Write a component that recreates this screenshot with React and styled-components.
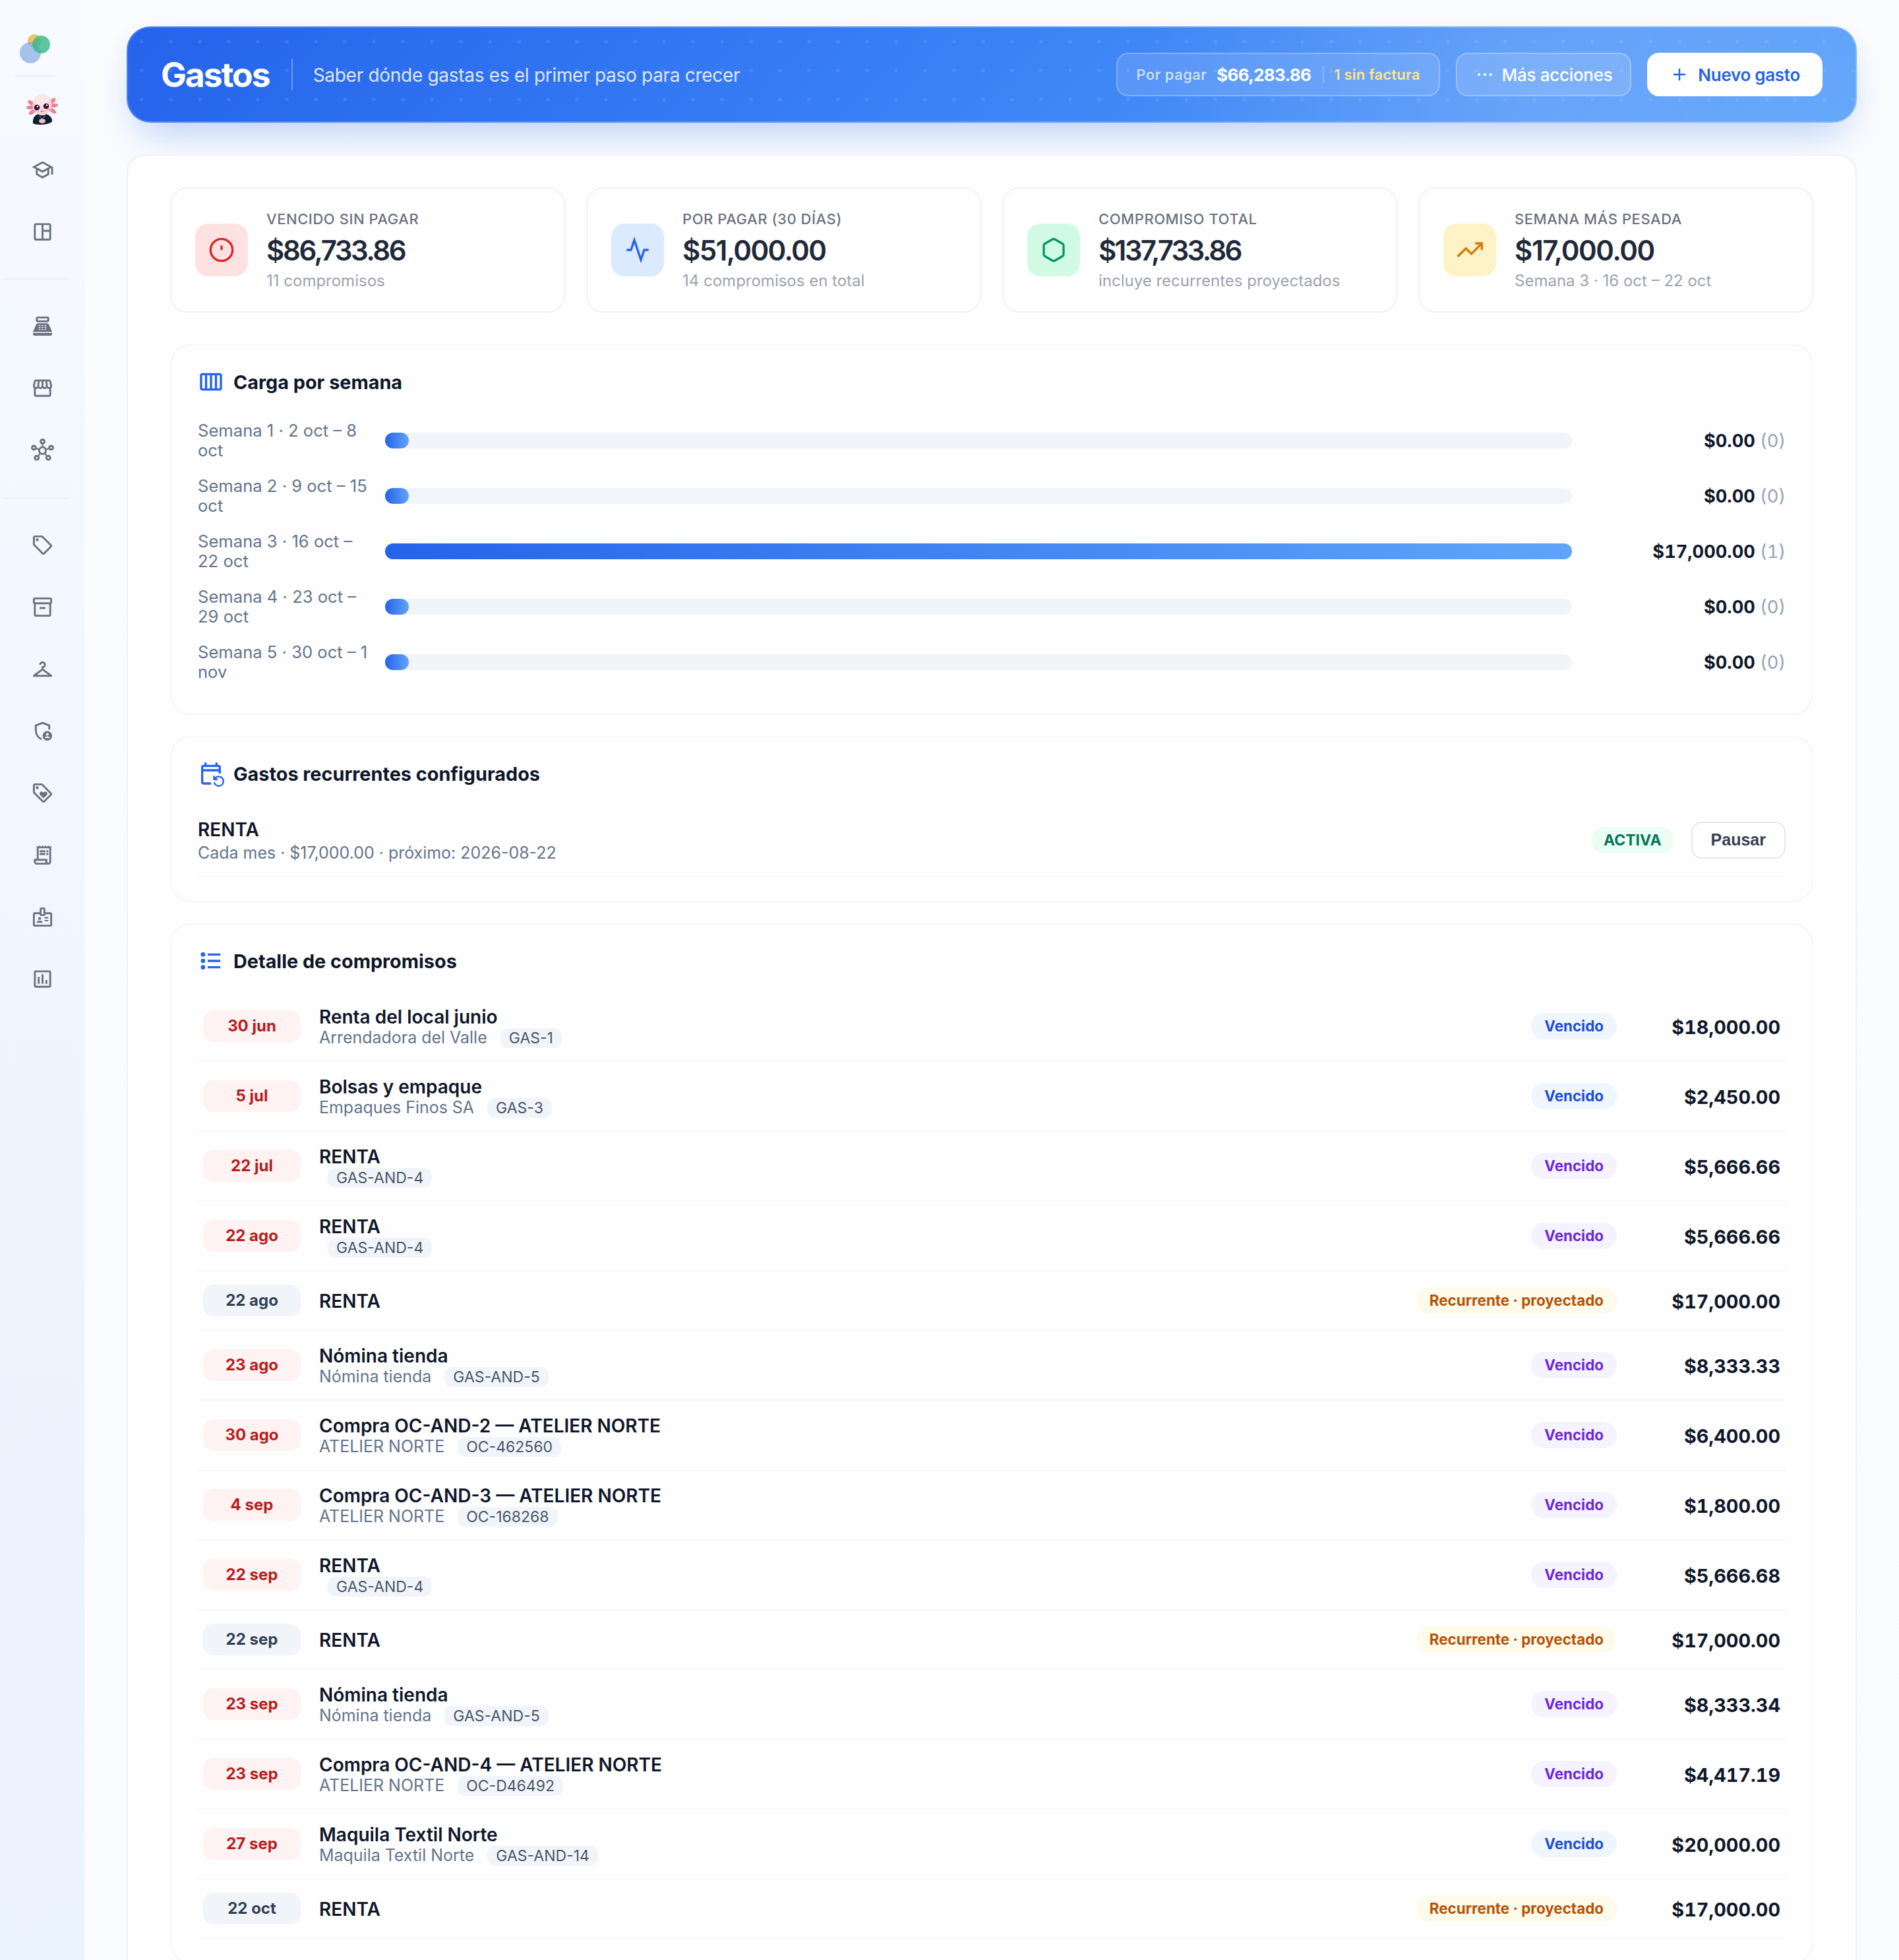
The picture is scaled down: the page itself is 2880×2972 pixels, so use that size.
import React from 'react'
import styled, { createGlobalStyle } from 'styled-components'
import {
  MdOutlineSchool,
  MdOutlineSpaceDashboard,
  MdPointOfSale,
  MdOutlineStorefront,
  MdOutlineHub,
  MdOutlineSell,
  MdOutlineInventory2,
  MdOutlineCheckroom,
  MdOutlineLoyalty,
  MdOutlineReceiptLong,
  MdOutlineBadge,
  MdOutlineInsertChart,
  MdOutlineCalendarViewWeek,
  MdOutlineEventRepeat
} from 'react-icons/md'

const ShieldPerson = () => (
  <svg viewBox="0 0 24 24" fill="none">
    <path d="M19 10.500V6.200L12 3.500 5 6.200v4.900c0 4.400 2.600 7.900 6 9.400" stroke="currentColor" strokeWidth="2" />
    <circle cx="17" cy="17" r="5" fill="currentColor" />
    <circle cx="17" cy="15.400" r="1.400" fill="#f2f6ff" />
    <path d="M14.300 19.200c.4-1.200 1.500-1.700 2.700-1.700s2.300.5 2.700 1.700z" fill="#f2f6ff" />
  </svg>
)

const BulletList = () => (
  <svg viewBox="0 0 24 24" fill="currentColor">
    <circle cx="4.700" cy="6.200" r="2" />
    <circle cx="4.700" cy="12" r="2" />
    <circle cx="4.700" cy="17.800" r="2" />
    <path d="M9 5.200h11.500v2H9zM9 11h11.500v2H9zM9 16.800h11.500v2H9z" />
  </svg>
)

const navGroups = [
  [MdOutlineSchool, MdOutlineSpaceDashboard],
  [MdPointOfSale, MdOutlineStorefront, MdOutlineHub],
  [
    MdOutlineSell,
    MdOutlineInventory2,
    MdOutlineCheckroom,
    ShieldPerson,
    MdOutlineLoyalty,
    MdOutlineReceiptLong,
    MdOutlineBadge,
    MdOutlineInsertChart
  ]
]

const stats = [
  {
    label: 'VENCIDO SIN PAGAR',
    value: '$86,733.86',
    spacing: '-2.400px',
    note: '11 compromisos',
    color: '#dc2626',
    bg: '#fee2e2',
    icon: <><circle cx="12" cy="12" r="10" /><path d="M12 8v4" strokeLinecap="butt" /></>
  },
  {
    label: 'POR PAGAR (30 DÍAS)',
    value: '$51,000.00',
    spacing: '-1.600px',
    note: '14 compromisos en total',
    color: '#2563eb',
    bg: '#dbeafe',
    icon: <path d="M22 12h-4l-3 9L9 3l-3 9H2" />
  },
  {
    label: 'COMPROMISO TOTAL',
    value: '$137,733.86',
    spacing: '-2.700px',
    note: 'incluye recurrentes proyectados',
    color: '#059669',
    bg: '#d1fae5',
    icon: <path d="M21 16V8a2 2 0 0 0-1-1.73l-7-4a2 2 0 0 0-2 0l-7 4A2 2 0 0 0 3 8v8a2 2 0 0 0 1 1.73l7 4a2 2 0 0 0 2 0l7-4A2 2 0 0 0 21 16z" />
  },
  {
    label: 'SEMANA MÁS PESADA',
    value: '$17,000.00',
    spacing: '-1.400px',
    note: 'Semana 3 · 16 oct – 22 oct',
    color: '#d97706',
    bg: '#fef3c7',
    icon: <><path d="M23 6l-9.500 9.500-5-5L1 18" /><path d="M17 6h6v6" /></>
  }
]

const weeks = [
  { label: 'Semana 1 · 2 oct – 8 oct', pct: 2, total: '$0.00', count: 0 },
  { label: 'Semana 2 · 9 oct – 15 oct', pct: 2, total: '$0.00', count: 0 },
  { label: 'Semana 3 · 16 oct – 22 oct', pct: 100, total: '$17,000.00', count: 1 },
  { label: 'Semana 4 · 23 oct – 29 oct', pct: 2, total: '$0.00', count: 0 },
  { label: 'Semana 5 · 30 oct – 1 nov', pct: 2, total: '$0.00', count: 0 }
]

const items = [
  { date: '30 jun', title: 'Renta del local junio', who: 'Arrendadora del Valle', ref: 'GAS-1', kind: 'blue', amount: '$18,000.00' },
  { date: '5 jul', title: 'Bolsas y empaque', who: 'Empaques Finos SA', ref: 'GAS-3', kind: 'blue', amount: '$2,450.00' },
  { date: '22 jul', title: 'RENTA', who: '', ref: 'GAS-AND-4', kind: 'purple', amount: '$5,666.66' },
  { date: '22 ago', title: 'RENTA', who: '', ref: 'GAS-AND-4', kind: 'purple', amount: '$5,666.66' },
  { date: '22 ago', title: 'RENTA', kind: 'amber', amount: '$17,000.00' },
  { date: '23 ago', title: 'Nómina tienda', who: 'Nómina tienda', ref: 'GAS-AND-5', kind: 'purple', amount: '$8,333.33' },
  { date: '30 ago', title: 'Compra OC-AND-2 — ATELIER NORTE', who: 'ATELIER NORTE', ref: 'OC-462560', kind: 'purple', amount: '$6,400.00' },
  { date: '4 sep', title: 'Compra OC-AND-3 — ATELIER NORTE', who: 'ATELIER NORTE', ref: 'OC-168268', kind: 'purple', amount: '$1,800.00' },
  { date: '22 sep', title: 'RENTA', who: '', ref: 'GAS-AND-4', kind: 'purple', amount: '$5,666.68' },
  { date: '22 sep', title: 'RENTA', kind: 'amber', amount: '$17,000.00' },
  { date: '23 sep', title: 'Nómina tienda', who: 'Nómina tienda', ref: 'GAS-AND-5', kind: 'purple', amount: '$8,333.34' },
  { date: '23 sep', title: 'Compra OC-AND-4 — ATELIER NORTE', who: 'ATELIER NORTE', ref: 'OC-D46492', kind: 'purple', amount: '$4,417.19' },
  { date: '27 sep', title: 'Maquila Textil Norte', who: 'Maquila Textil Norte', ref: 'GAS-AND-14', kind: 'blue', amount: '$20,000.00' },
  { date: '22 oct', title: 'RENTA', kind: 'amber', amount: '$17,000.00' }
]

const kinds = {
  blue: { color: '#1d4ed8', bg: '#eff6ff' },
  purple: { color: '#6d28d9', bg: '#f5f3ff' },
  amber: { color: '#b45309', bg: '#fffbeb' }
}

const Logo = () => (
  <svg width="48" height="46" viewBox="0 0 48 46">
    <circle cx="22" cy="10" r="10" fill="#e9b44c" opacity="0.8" />
    <circle cx="16" cy="28" r="16" fill="#7ba4e0" opacity="0.65" />
    <circle cx="32.500" cy="15.500" r="13.500" fill="#34b98a" opacity="0.8" />
  </svg>
)

const Axolotl = () => (
  <svg width="48" height="48" viewBox="0 0 48 48">
    <g fill="#e8838f">
      <ellipse cx="7" cy="15" rx="5.500" ry="3" transform="rotate(35 7 15)" />
      <ellipse cx="6" cy="22" rx="6" ry="3" />
      <ellipse cx="8.500" cy="29" rx="5.500" ry="3" transform="rotate(-40 8.500 29)" />
      <ellipse cx="40" cy="12" rx="5.500" ry="3" transform="rotate(-50 40 12)" />
      <ellipse cx="42" cy="19" rx="6" ry="3" transform="rotate(-8 42 19)" />
      <ellipse cx="40" cy="27" rx="6" ry="3" transform="rotate(35 40 27)" />
    </g>
    <path d="M10 46c-1-8 3-15 14-15s16 8 15 12c-4 6-25 6-29 3z" fill="#131c2e" />
    <ellipse cx="24" cy="18" rx="14.500" ry="16" fill="#f7d0d4" />
    <ellipse cx="23.500" cy="11" rx="11" ry="8.500" fill="#fbe6e6" />
    <ellipse cx="13" cy="27" rx="2.500" ry="1.800" fill="#f2a0b4" />
    <ellipse cx="34" cy="25" rx="2.500" ry="1.800" fill="#f2a0b4" />
    <circle cx="16" cy="22" r="4.200" fill="#2a1838" />
    <circle cx="30" cy="20" r="4.200" fill="#2a1838" />
    <circle cx="17" cy="20.500" r="1.200" fill="#fff" />
    <circle cx="31" cy="18.500" r="1.200" fill="#fff" />
    <path d="M21.500 27.500q2.500 2 5 0" stroke="#b4505f" strokeWidth="1" fill="none" />
    <path d="M19 35l5 4 5-4" stroke="#28528c" strokeWidth="2" fill="none" />
    <ellipse cx="24" cy="42.500" rx="5" ry="3.500" fill="#f3bfc0" />
  </svg>
)

const App = () => {
  return (
    <>
      <GlobalStyle />
      <Page>
        <Sidebar>
          <Brand><Logo /></Brand>
          <BrandLine />
          <Avatar><Axolotl /></Avatar>
          {navGroups.map((group, i) => (
            <NavGroup key={i}>
              {group.map((Icon, j) => (
                <NavItem key={j}><Icon /></NavItem>
              ))}
            </NavGroup>
          ))}
        </Sidebar>
        <Main>
          <Hero>
            <HeroTitle>Gastos</HeroTitle>
            <HeroText>Saber dónde gastas es el primer paso para crecer</HeroText>
            <HeroActions>
              <DuePill>
                <span className="label">Por pagar</span>
                <span className="total">$66,283.86</span>
                <span className="warn">1 sin factura</span>
              </DuePill>
              <GhostButton>
                <svg width="28" height="28" viewBox="0 0 24 24" fill="currentColor">
                  <circle cx="4.500" cy="12" r="1.700" />
                  <circle cx="12" cy="12" r="1.700" />
                  <circle cx="19.500" cy="12" r="1.700" />
                </svg>
                <span>Más acciones</span>
              </GhostButton>
              <PrimaryButton>
                <svg width="24" height="24" viewBox="0 0 24 24" fill="none" stroke="currentColor" strokeWidth="2.400">
                  <path d="M12 3v18M3 12h18" />
                </svg>
                <span>Nuevo gasto</span>
              </PrimaryButton>
            </HeroActions>
          </Hero>

          <Panel>
            <Stats>
              {stats.map((s) => (
                <StatCard key={s.label}>
                  <StatIcon $color={s.color} $bg={s.bg}>
                    <svg viewBox="0 0 24 24" fill="none" stroke="currentColor" strokeWidth="2">{s.icon}</svg>
                  </StatIcon>
                  <StatBody $spacing={s.spacing}>
                    <div className="label">{s.label}</div>
                    <div className="value">{s.value}</div>
                    <div className="note">{s.note}</div>
                  </StatBody>
                </StatCard>
              ))}
            </Stats>

            <Section $bottom="48px">
              <SectionTitle $gap="39px"><MdOutlineCalendarViewWeek /><h2>Carga por semana</h2></SectionTitle>
              <Weeks>
                {weeks.map((w) => (
                  <WeekRow key={w.label}>
                    <WeekLabel>{w.label}</WeekLabel>
                    <Track><Fill style={{ width: `${w.pct}%` }} /></Track>
                    <WeekTotal>{w.total} <span>({w.count})</span></WeekTotal>
                  </WeekRow>
                ))}
              </Weeks>
            </Section>

            <Section $bottom="36px">
              <SectionTitle $gap="26px"><MdOutlineEventRepeat /><h2>Gastos recurrentes configurados</h2></SectionTitle>
              <RecurringRow>
                <div>
                  <RowTitle>RENTA</RowTitle>
                  <RecurringMeta>Cada mes · $17,000.00 · próximo: 2026-08-22</RecurringMeta>
                </div>
                <RecurringActions>
                  <StatusBadge>ACTIVA</StatusBadge>
                  <PauseButton>Pausar</PauseButton>
                </RecurringActions>
              </RecurringRow>
            </Section>

            <Section $bottom="36px">
              <SectionTitle $gap="27px"><BulletList /><h2>Detalle de compromisos</h2></SectionTitle>
              {items.map((it, i) => (
                <ItemRow key={i} $short={!it.ref}>
                  <DatePill $projected={it.kind === 'amber'}>{it.date}</DatePill>
                  <ItemBody>
                    <RowTitle>{it.title}</RowTitle>
                    {it.ref && <ItemMeta>{it.who} <RefTag>{it.ref}</RefTag></ItemMeta>}
                  </ItemBody>
                  <KindBadge $kind={kinds[it.kind]}>
                    {it.kind === 'amber' ? 'Recurrente · proyectado' : 'Vencido'}
                  </KindBadge>
                  <Amount>{it.amount}</Amount>
                </ItemRow>
              ))}
            </Section>
          </Panel>
        </Main>
      </Page>
    </>
  )
}

const GlobalStyle = createGlobalStyle`
    * {
        box-sizing: border-box;
    }
    body {
        margin: 0;
        background: #fbfcfe;
        font-family: Inter, "Liberation Sans", sans-serif;
        color: #0f172a;
    }
`

const Page = styled.div`
    display: flex;
    height: 2972px;
    overflow: hidden;
    background: linear-gradient(180deg, #fafcfd 0%, #fbfcff 30%, #fafbfd 100%);
`

const Sidebar = styled.aside`
    width: 128px;
    flex-shrink: 0;
    padding-top: 50px;
    background: linear-gradient(180deg, #f7faff 0%, #f3f7ff 30%, #f0f5ff 50%, #ecf2fd 80%, #ebf3fe 100%);
`

const Brand = styled.div`
    height: 64px;
    padding-left: 30px;
    padding-top: 2px;
`

const BrandLine = styled.div`
    width: 62px;
    height: 2px;
    margin-left: 22px;
    background: #eaeef4;
`

const Avatar = styled.div`
    height: 94px;
    display: flex;
    align-items: center;
    justify-content: center;
    padding-top: 4px;
`

const NavGroup = styled.nav`
    & + & {
        margin-top: 24px;
        padding-top: 25.500px;
        background: linear-gradient(#eaeef4, #eaeef4) 6px 0 / 96px 2px no-repeat;
    }
`

const NavItem = styled.div`
    height: 94px;
    display: flex;
    align-items: center;
    justify-content: center;
    color: #6b7280;
    svg {
        width: 35px;
        height: 35px;
    }
`

const Main = styled.main`
    flex: 1;
    padding: 40px 64px 0;
`

const Hero = styled.header`
    display: flex;
    align-items: center;
    height: 146px;
    padding: 0 50px;
    border: 2px solid rgba(255, 255, 255, 0.2);
    border-radius: 36px;
    background:
        radial-gradient(circle, rgba(255, 255, 255, 0.1) 2px, transparent 3.500px) -1px -1px / 44px 44px,
        radial-gradient(circle at 82% 60%, rgba(255, 255, 255, 0.13), transparent 620px),
        linear-gradient(135deg, #2563eb 0%, #3b82f6 50%, #60a5fa 100%) border-box;
    box-shadow: 0 32px 64px -20px rgba(37, 99, 235, 0.3), 0 8px 40px rgba(37, 99, 235, 0.03);
    color: #fff;
`

const HeroTitle = styled.h1`
    margin: 0;
    font-size: 52px;
    font-weight: 700;
    letter-spacing: -2.200px;
`

const HeroText = styled.p`
    margin: 0 0 0 33px;
    padding-left: 31px;
    height: 48px;
    line-height: 50px;
    border-left: 2px solid rgba(255, 255, 255, 0.3);
    font-size: 28px;
    letter-spacing: -0.300px;
    color: rgba(255, 255, 255, 0.85);
`

const HeroActions = styled.div`
    display: flex;
    gap: 24px;
    margin-left: auto;
`

const DuePill = styled.div`
    display: flex;
    align-items: center;
    height: 66px;
    padding: 0 28px;
    border: 2px solid rgba(255, 255, 255, 0.25);
    border-radius: 18px;
    background: rgba(255, 255, 255, 0.12);
    .label {
        font-size: 22px;
        font-weight: 500;
        letter-spacing: 0.500px;
        color: rgba(255, 255, 255, 0.75);
    }
    .total {
        margin-left: 15px;
        font-size: 26px;
        font-weight: 700;
        letter-spacing: -0.700px;
    }
    .warn {
        margin-left: 18px;
        padding-left: 15px;
        border-left: 2px solid rgba(255, 255, 255, 0.25);
        font-size: 22px;
        font-weight: 600;
        letter-spacing: 0.200px;
        color: #fde68a;
    }
`

const GhostButton = styled.button`
    display: flex;
    align-items: center;
    gap: 12px;
    height: 66px;
    padding: 0 27px 0 28px;
    border: 2px solid rgba(255, 255, 255, 0.25);
    border-radius: 18px;
    background: rgba(255, 255, 255, 0.14);
    color: #fff;
    font-family: inherit;
    font-size: 26px;
    font-weight: 500;
    letter-spacing: -0.300px;
`

const PrimaryButton = styled(GhostButton)`
    gap: 16px;
    padding: 0 32px 0 35px;
    border-color: #fff;
    background: #fff;
    color: #2563eb;
    font-weight: 600;
`

const Panel = styled.div`
    margin-top: 48px;
    height: 2900px;
    padding: 48px 64px;
    border: 2px solid #eef1f4;
    border-radius: 28px;
    background: #fefefe;
`

const Stats = styled.div`
    display: grid;
    grid-template-columns: repeat(4, 1fr);
    gap: 32px;
    margin-bottom: 48px;
`

const StatCard = styled.div`
    display: flex;
    align-items: center;
    gap: 28px;
    height: 190px;
    padding: 0 36px;
    border: 2px solid #f0f1f3;
    border-radius: 26px;
    background: #fff;
`

const StatIcon = styled.div`
    display: flex;
    align-items: center;
    justify-content: center;
    width: 80px;
    height: 80px;
    border-radius: 20px;
    background: ${p => p.$bg};
    color: ${p => p.$color};
    svg {
        width: 40px;
        height: 40px;
    }
`

const StatBody = styled.div`
    .label {
        font-size: 22px;
        font-weight: 500;
        line-height: 32px;
        letter-spacing: 0.550px;
        color: #6b7280;
    }
    .value {
        padding-top: 2px;
        font-size: 42px;
        font-weight: 600;
        line-height: 60px;
        letter-spacing: ${p => p.$spacing};
        color: #1f2937;
    }
    .note {
        font-size: 24px;
        line-height: 32px;
        color: #9ca3af;
    }
`

const Section = styled.section`
    margin-bottom: 32px;
    padding: 35px 40px ${p => p.$bottom};
    border: 2px solid #f5f7f9;
    border-radius: 32px;
    background: #fefefe;
`

const SectionTitle = styled.div`
    display: flex;
    align-items: center;
    gap: 14px;
    height: 40px;
    margin-bottom: ${p => p.$gap};
    svg {
        width: 40px;
        height: 40px;
        color: #2563eb;
    }
    h2 {
        margin: 0;
        font-size: 28.800px;
        font-weight: 700;
    }
`

const Weeks = styled.div`
    display: grid;
    gap: 24px;
`

const WeekRow = styled.div`
    display: grid;
    grid-template-columns: 260px 1fr 300px;
    gap: 24px;
    align-items: center;
`

const WeekLabel = styled.div`
    font-size: 25.600px;
    line-height: 30px;
    color: #64748b;
`

const Track = styled.div`
    height: 24px;
    border-radius: 12px;
    background: #f1f5f9;
`

const Fill = styled.div`
    height: 100%;
    border-radius: 12px;
    background: linear-gradient(90deg, #2563eb, #60a5fa);
`

const WeekTotal = styled.div`
    text-align: right;
    font-size: 27.200px;
    font-weight: 700;
    font-variant-numeric: tabular-nums;
    span {
        font-weight: 400;
        color: #94a3b8;
    }
`

const RowTitle = styled.div`
    padding-top: 2px;
    font-size: 28px;
    font-weight: 600;
    line-height: 32px;
`

const RecurringRow = styled.div`
    display: flex;
    align-items: center;
    justify-content: space-between;
    height: 111px;
    border-bottom: 2px solid #f9fafc;
`

const RecurringMeta = styled.div`
    margin-top: 4px;
    font-size: 24.960px;
    line-height: 30px;
    color: #64748b;
`

const RecurringActions = styled.div`
    display: flex;
    align-items: center;
    gap: 26px;
`

const StatusBadge = styled.span`
    padding: 0 19px;
    line-height: 40px;
    border-radius: 20px;
    background: #ecfdf5;
    color: #047857;
    font-size: 23px;
    font-weight: 700;
`

const PauseButton = styled.button`
    height: 56px;
    padding: 0 28px;
    border: 2px solid #e5e7eb;
    border-radius: 16px;
    background: #fff;
    color: #374151;
    font-family: "Liberation Sans", Arial, sans-serif;
    font-size: 25px;
    font-weight: 600;
`

const ItemRow = styled.div`
    display: flex;
    align-items: center;
    height: ${p => (p.$short ? '90px' : '106px')};
    padding: 0 8px;
    border-bottom: 2px solid ${p => (p.$short ? '#f9fafc' : '#f5f7f9')};
`

const DatePill = styled.div`
    width: 148px;
    height: 48px;
    line-height: 48px;
    border-radius: 16px;
    background: ${p => (p.$projected ? '#f1f5f9' : '#fef2f2')};
    color: ${p => (p.$projected ? '#334155' : '#b91c1c')};
    text-align: center;
    font-size: 24px;
    font-weight: 700;
`

const ItemBody = styled.div`
    flex: 1;
    margin-left: 28px;
`

const ItemMeta = styled.div`
    font-size: 24.960px;
    line-height: 30px;
    color: #64748b;
`

const RefTag = styled.span`
    display: inline-block;
    margin-left: 13px;
    padding: 0 13px;
    border-radius: 12px;
    background: #f1f5f9;
    color: #475569;
    font-size: 23px;
`

const KindBadge = styled.span`
    padding: 0 20px;
    line-height: 40px;
    border-radius: 20px;
    background: ${p => p.$kind.bg};
    color: ${p => p.$kind.color};
    font-size: 22.400px;
    font-weight: 700;
`

const Amount = styled.div`
    width: 248px;
    padding-top: 2px;
    text-align: right;
    font-size: 28.800px;
    font-weight: 700;
    font-variant-numeric: tabular-nums;
`

export default App
